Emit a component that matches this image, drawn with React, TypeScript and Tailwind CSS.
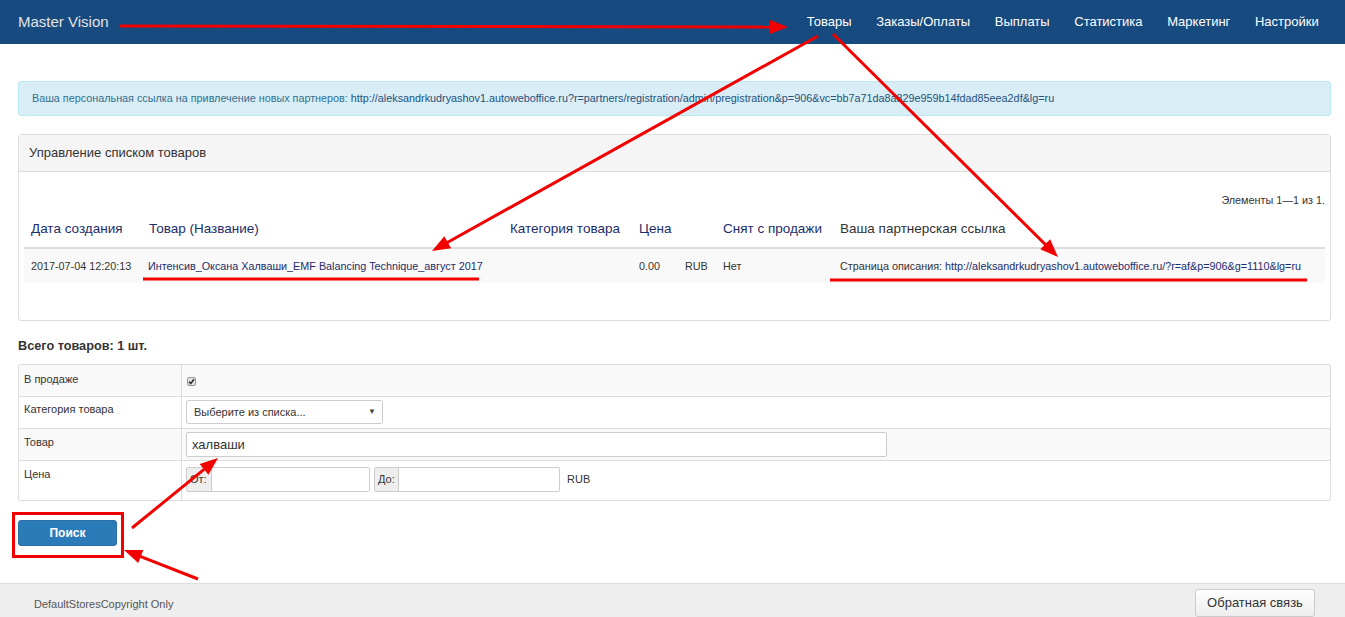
import React from "react";

function Arrow({ x1, y1, x2, y2 }: { x1: number; y1: number; x2: number; y2: number }) {
  const dx = x2 - x1;
  const dy = y2 - y1;
  const len = Math.sqrt(dx * dx + dy * dy);
  const ux = dx / len;
  const uy = dy / len;
  const L = 18;
  const W = 7;
  const bx = x2 - ux * L;
  const by = y2 - uy * L;
  const p1 = `${x2},${y2}`;
  const p2 = `${bx - uy * W},${by + ux * W}`;
  const p3 = `${bx + uy * W},${by - ux * W}`;
  return (
    <g>
      <line x1={x1} y1={y1} x2={bx + ux * 2} y2={by + uy * 2} stroke="#f20000" strokeWidth={3} />
      <polygon points={`${p1} ${p2} ${p3}`} fill="#f20000" />
    </g>
  );
}

export default function App() {
  const font = { fontFamily: '"Liberation Sans", Arial, sans-serif' };
  return (
    <div className="relative h-[617px] overflow-hidden bg-white flex flex-col text-[#333]" style={font}>
      {/* Navbar */}
      <div className="h-[44px] bg-[#174a7f] flex items-center justify-between shrink-0">
        <div className="pl-[18px] text-[15px] text-[#e2e2e2]">Master Vision</div>
        <div className="flex items-center pr-[14px] text-[13px] text-white">
          <span className="px-[12.3px]">Товары</span>
          <span className="px-[12.3px]">Заказы/Оплаты</span>
          <span className="px-[12.3px]">Выплаты</span>
          <span className="px-[12.3px]">Статистика</span>
          <span className="px-[12.3px]">Маркетинг</span>
          <span className="px-[12.3px]">Настройки</span>
        </div>
      </div>

      <div className="pl-[18px] pr-[14px] flex flex-col">
        {/* Alert */}
        <div className="mt-[37px] h-[35px] border border-[#bce8f1] bg-[#d9edf7] rounded-[3px] flex items-center px-[13px] text-[10.8px]">
          <span className="text-[#31708f]">Ваша персональная ссылка на привлечение новых партнеров:&nbsp;</span>
          <span className="text-[#23527c]">
            http://aleksandrkudryashov1.autoweboffice.ru?r=partners/registration/admin/pregistration&amp;p=906&amp;vc=bb7a71da8a829e959b14fdad85eea2df&amp;lg=ru
          </span>
        </div>

        {/* Panel */}
        <div className="mt-[18px] border border-[#ddd] rounded-[3px]">
          <div className="h-[37px] bg-[#f5f5f5] border-b border-[#ddd] flex items-center px-[10px] text-[13px] text-[#333]">
            Управление списком товаров
          </div>
          <div className="pt-[21px] px-[5px] pb-[37px]">
            <div className="text-right text-[10.8px] leading-[14px] text-[#333]">Элементы 1—1 из 1.</div>
            <div className="mt-[4px]">
              <div className="grid grid-cols-[118px_361px_129px_46px_38px_117px_1fr] h-[38px] items-center border-b-2 border-[#ddd] text-[13.5px]">
                <span className="pl-[7px] text-[#1c2d6b]">Дата создания</span>
                <span className="pl-[7px] text-[#1c2d6b]">Товар (Название)</span>
                <span className="pl-[7px] text-[#1c2d6b]">Категория товара</span>
                <span className="pl-[7px] text-[#1c2d6b]">Цена</span>
                <span></span>
                <span className="pl-[7px] text-[#1c2d6b]">Снят с продажи</span>
                <span className="pl-[7px] text-[#333]">Ваша партнерская ссылка</span>
              </div>
              <div className="grid grid-cols-[118px_361px_129px_46px_38px_117px_1fr] h-[34px] items-center bg-[#f9f9f9] text-[10.8px]">
                <span className="pl-[7px]">2017-07-04 12:20:13</span>
                <span className="pl-[6px] text-[#1c2d6b]">Интенсив_Оксана Халваши_EMF Balancing Technique_август 2017</span>
                <span></span>
                <span className="pl-[7px]">0.00</span>
                <span className="pl-[7px]">RUB</span>
                <span className="pl-[7px]">Нет</span>
                <span className="pl-[7px]">
                  Страница описания: <span className="text-[#1c2d6b]">http://aleksandrkudryashov1.autoweboffice.ru/?r=af&amp;p=906&amp;g=1110&amp;lg=ru</span>
                </span>
              </div>
            </div>
          </div>
        </div>

        {/* Totals */}
        <div className="mt-[18px] text-[12.7px] leading-[14px] font-bold text-[#333]">Всего товаров: 1 шт.</div>

        {/* Filter form */}
        <div className="mt-[11px] border border-[#ddd] rounded-[2px] text-[11px]">
          <div className="grid grid-cols-[163px_1fr] h-[32px] bg-[#f9f9f9] border-b border-[#ddd]">
            <div className="pl-[5px] pt-[7px] leading-[14px] border-r border-[#ddd]">В продаже</div>
            <div className="pl-[5px] pt-[12px]">
              <span className="flex items-center justify-center w-[9px] h-[9px] border border-[#999] rounded-[2px] bg-[#e3e3e3]">
                <svg width="7" height="7" viewBox="0 0 7 7">
                  <path d="M1 3.6 L2.8 5.5 L6 1.2" stroke="#333" strokeWidth="1.6" fill="none" />
                </svg>
              </span>
            </div>
          </div>
          <div className="grid grid-cols-[163px_1fr] h-[32px] bg-white border-b border-[#ddd]">
            <div className="pl-[5px] pt-[5px] leading-[14px] border-r border-[#ddd]">Категория товара</div>
            <div className="pl-[4px] pt-[3px]">
              <div className="w-[197px] h-[24px] border border-[#ccc] rounded-[3px] flex items-center justify-between pl-[7px] pr-[6px] bg-white">
                <span className="text-[11px] text-[#333]">Выберите из списка...</span>
                <span className="text-[8px] text-[#444]">▼</span>
              </div>
            </div>
          </div>
          <div className="grid grid-cols-[163px_1fr] h-[32px] bg-[#f9f9f9] border-b border-[#ddd]">
            <div className="pl-[5px] pt-[6px] leading-[14px] border-r border-[#ddd]">Товар</div>
            <div className="pl-[4px] pt-[3px]">
              <div className="w-[701px] h-[25px] border border-[#ccc] rounded-[2px] bg-white flex items-center pl-[5px] text-[13px] text-[#333]">
                халваши
              </div>
            </div>
          </div>
          <div className="grid grid-cols-[163px_1fr] h-[39px] bg-white">
            <div className="pl-[5px] pt-[6px] leading-[14px] border-r border-[#ddd]">Цена</div>
            <div className="pl-[4px] pt-[6px] flex items-start">
              <div className="flex h-[25px] w-[184px] border border-[#ccc] rounded-[2px]">
                <span className="w-[25px] bg-[#eee] border-r border-[#ccc] flex items-center pl-[3px] text-[11px]">От:</span>
                <span className="flex-1 bg-white"></span>
              </div>
              <div className="ml-[4px] flex h-[25px] w-[186px] border border-[#ccc] rounded-[2px]">
                <span className="w-[24px] bg-[#eee] border-r border-[#ccc] flex items-center pl-[3px] text-[11px]">До:</span>
                <span className="flex-1 bg-white"></span>
              </div>
              <span className="ml-[7px] h-[25px] flex items-center text-[11px]">RUB</span>
            </div>
          </div>
        </div>

        {/* Search button */}
        <div className="mt-[19px]">
          <div className="w-[99px] h-[26px] bg-[#2b7bb9] border border-[#2a6ea6] rounded-[3px] flex items-center justify-center text-white text-[12px] font-bold">
            Поиск
          </div>
        </div>
      </div>

      {/* Footer */}
      <div className="mt-auto h-[34px] shrink-0 bg-[#eeeeee] border-t border-[#dddddd] flex items-start justify-between pl-[34px] pr-[30px]">
        <span className="mt-[12px] text-[11px] text-[#555]">DefaultStoresCopyright Only</span>
        <div className="mt-[5px] w-[120px] h-[28px] border border-[#ccc] rounded-[3px] bg-gradient-to-b from-white to-[#ededed] flex items-center justify-center text-[13px] text-[#333]">
          Обратная связь
        </div>
      </div>

      {/* Red annotations */}
      <svg className="absolute inset-0 pointer-events-none" width="1345" height="617" viewBox="0 0 1345 617">
        <Arrow x1={120} y1={26} x2={788} y2={27} />
        <Arrow x1={818} y1={36} x2={432} y2={251} />
        <Arrow x1={833} y1={34} x2={1058} y2={257} />
        <line x1={143} y1={279} x2={479} y2={279} stroke="#f20000" strokeWidth={3} />
        <line x1={830} y1={280} x2={1307} y2={280} stroke="#f20000" strokeWidth={3} />
        <Arrow x1={132} y1={528} x2={218} y2={458} />
        <Arrow x1={198} y1={579} x2={124} y2={550} />
        <rect x={13.5} y={513.5} width={109} height={43} fill="none" stroke="#f20000" strokeWidth={3} />
      </svg>
    </div>
  );
}
